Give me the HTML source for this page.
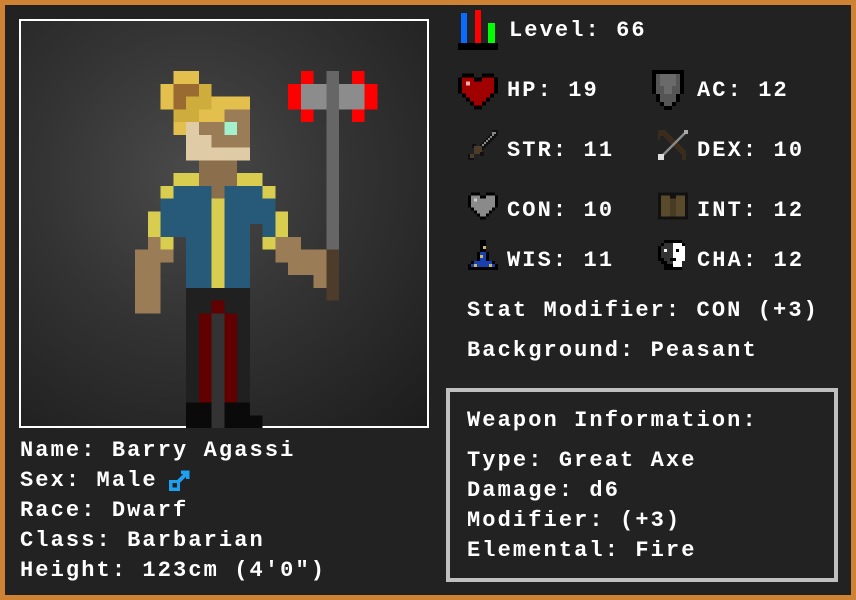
<!DOCTYPE html>
<html><head><meta charset="utf-8">
<style>
html,body{margin:0;padding:0;}
body{width:856px;height:600px;background:#cd8234;position:relative;overflow:hidden;font-family:"Liberation Mono",monospace;font-weight:bold;color:#fff;}
#panel{position:absolute;left:5px;top:5px;width:846px;height:590px;background:#222;}
#img{position:absolute;left:19px;top:19px;width:406px;height:405px;border:2px solid #fff;background:radial-gradient(circle at 42% 38%,#4a4a4a 0%,#333 45%,#1c1c1c 100%);}
.t{position:absolute;font-size:22px;letter-spacing:2.1px;line-height:22px;white-space:pre;}
#wbox{position:absolute;left:446px;top:388px;width:384px;height:186px;border:4px solid #c0c0c0;}
svg{position:absolute;shape-rendering:crispEdges;}
</style></head><body>
<div id="panel"></div>
<div id="img"></div>
<svg style="left:135px;top:71px" width="255" height="357" viewBox="0 0 20 28">
<g>
<rect x="3" y="0" width="2" height="1" fill="#e3bf4d"/>
<rect x="2" y="1" width="1" height="2" fill="#e3bf4d"/>
<rect x="3" y="1" width="2" height="1" fill="#9a6b30"/>
<rect x="3" y="2" width="1" height="1" fill="#9a6b30"/>
<rect x="5" y="1" width="1" height="1" fill="#cfad3c"/>
<rect x="4" y="2" width="2" height="1" fill="#cfad3c"/>
<rect x="6" y="2" width="3" height="1" fill="#e3bf4d"/>
<rect x="3" y="3" width="2" height="1" fill="#cfad3c"/>
<rect x="5" y="3" width="2" height="1" fill="#e3bf4d"/>
<rect x="7" y="3" width="2" height="1" fill="#9a7c56"/>
<rect x="3" y="4" width="1" height="1" fill="#e3bf4d"/>
<rect x="4" y="4" width="1" height="2" fill="#dfcba5"/>
<rect x="5" y="4" width="2" height="1" fill="#9a7c56"/>
<rect x="7" y="4" width="1" height="1" fill="#a3f0cc"/>
<rect x="8" y="4" width="1" height="1" fill="#9a7c56"/>
<rect x="5" y="5" width="1" height="1" fill="#dfcba5"/>
<rect x="6" y="5" width="3" height="1" fill="#9a7c56"/>
<rect x="4" y="6" width="5" height="1" fill="#dfcba5"/>
<rect x="5" y="7" width="3" height="2" fill="#8b6e4c"/>
<rect x="3" y="8" width="2" height="1" fill="#d9cd4f"/>
<rect x="8" y="8" width="2" height="1" fill="#d9cd4f"/>
<rect x="2" y="9" width="1" height="1" fill="#d9cd4f"/>
<rect x="10" y="9" width="1" height="1" fill="#d9cd4f"/>
<rect x="3" y="9" width="3" height="1" fill="#275a78"/>
<rect x="6" y="9" width="1" height="1" fill="#8b6e4c"/>
<rect x="7" y="9" width="3" height="1" fill="#275a78"/>
<rect x="2" y="10" width="4" height="3" fill="#275a78"/>
<rect x="7" y="10" width="4" height="2" fill="#275a78"/>
<rect x="7" y="12" width="2" height="1" fill="#275a78"/>
<rect x="10" y="12" width="1" height="1" fill="#275a78"/>
<rect x="1" y="11" width="1" height="2" fill="#d9cd4f"/>
<rect x="11" y="11" width="1" height="2" fill="#d9cd4f"/>
<rect x="6" y="10" width="1" height="7" fill="#d9cd4f"/>
<rect x="4" y="13" width="2" height="4" fill="#275a78"/>
<rect x="7" y="13" width="2" height="4" fill="#275a78"/>
<rect x="1" y="13" width="1" height="1" fill="#9a7c56"/>
<rect x="2" y="13" width="1" height="1" fill="#d9cd4f"/>
<rect x="10" y="13" width="1" height="1" fill="#d9cd4f"/>
<rect x="11" y="13" width="2" height="1" fill="#9a7c56"/>
<rect x="0" y="14" width="3" height="1" fill="#9a7c56"/>
<rect x="0" y="15" width="2" height="4" fill="#9a7c56"/>
<rect x="11" y="14" width="4" height="1" fill="#9a7c56"/>
<rect x="12" y="15" width="3" height="1" fill="#9a7c56"/>
<rect x="14" y="16" width="1" height="1" fill="#9a7c56"/>
<rect x="4" y="17" width="5" height="9" fill="#202020"/>
<rect x="6" y="18" width="1" height="1" fill="#600000"/>
<rect x="5" y="19" width="1" height="7" fill="#600000"/>
<rect x="7" y="19" width="1" height="7" fill="#600000"/>
<rect x="6" y="19" width="1" height="9" fill="#333"/>
<rect x="4" y="26" width="2" height="2" fill="#0a0a0a"/>
<rect x="7" y="26" width="2" height="2" fill="#0a0a0a"/>
<rect x="9" y="27" width="1" height="1" fill="#0a0a0a"/>
<rect x="15" y="0" width="1" height="14" fill="#666"/>
<rect x="15" y="14" width="1" height="4" fill="#4e3c2a"/>
<rect x="13" y="0" width="1" height="1" fill="#f00"/>
<rect x="17" y="0" width="1" height="1" fill="#f00"/>
<rect x="13" y="3" width="1" height="1" fill="#f00"/>
<rect x="17" y="3" width="1" height="1" fill="#f00"/>
<rect x="12" y="1" width="1" height="2" fill="#f00"/>
<rect x="18" y="1" width="1" height="2" fill="#f00"/>
<rect x="13" y="1" width="2" height="2" fill="#8c8c8c"/>
<rect x="16" y="1" width="2" height="2" fill="#8c8c8c"/>
</g>
</svg>

<svg style="left:458px;top:10px" width="40" height="40" viewBox="0 0 40 40">
<rect x="3" y="3" width="6" height="30" fill="#0a6cff"/>
<rect x="17" y="0" width="6" height="33" fill="#f00"/>
<rect x="30" y="13" width="7" height="20" fill="#0f0"/>
<rect x="0" y="33" width="40" height="7" fill="#000"/>
</svg>
<svg style="left:458px;top:73px" width="40" height="37" viewBox="0 0 10 9">
<path d="M1 0h3v1h2V0h3v1h1v4h-1v1h-1v1h-1v1h-1v1H4V8H3V7H2V6H1V5H0V1h1z" fill="#000"/>
<path d="M1 1h3v1h2V1h3v4H8v1H7v1H6v1H4V7H3V6H2V5H1z" fill="#a00000"/>
<rect x="2" y="2" width="1" height="1" fill="#f0b0b0"/>
</svg>
<svg style="left:651px;top:70px" width="34" height="40" viewBox="0 0 8 10">
<path d="M0 0h8v6H7v2H6v1H5v1H3V9H2V8H1V6H0z" fill="#000"/>
<path d="M1 1h6v5H6v2H5v1H3V8H2V6H1z" fill="#555"/>
<rect x="2" y="1" width="4" height="3" fill="#6a6a6a"/>
<rect x="3" y="4" width="2" height="2" fill="#6a6a6a"/>
</svg>
<svg style="left:468px;top:130px" width="30" height="30" viewBox="0 0 15 15">
<path d="M12 0h3v3h-1v1h-1v1h-1v1h-1v1h-1v1H9v1H8v1H7v1H6V9H5V8h1V7h1V6h1V5h1V4h1V3h1V2h1z" fill="#111"/>
<path d="M12 1h2v1h-1v1h-1v1h-1v1h-1v1H9v1H8v1H7v1H6V8h1V7h1V6h1V5h1V4h1V3h1z" fill="#888"/>
<rect x="2" y="7" width="2" height="2" fill="#111"/>
<rect x="3" y="8" width="4" height="4" fill="#4e3c2a"/>
<rect x="6" y="11" width="2" height="2" fill="#111"/>
<rect x="0" y="12" width="3" height="3" fill="#111"/>
<rect x="1" y="12" width="2" height="2" fill="#4e3c2a"/>
</svg>
<svg style="left:658px;top:130px" width="30" height="30" viewBox="0 0 15 15">
<path d="M0 0h4v1h1v1h1v1h1v1h1v1h1v1h1v1h1v1h1v1h1v1h1v5h-2v-3h-1v-1h-1v-1h-1v-1H9V9H8V8H7V7H6V6H5V5H4V4H3V3H1V5H0z" fill="#3a2c1c"/>
<path d="M2 13L14 1" stroke="#888" stroke-width="1.2"/>
<rect x="13" y="0" width="2" height="2" fill="#aaa"/>
<rect x="0" y="12" width="3" height="3" fill="#ddd"/>
</svg>
<svg style="left:468px;top:192px" width="30" height="28" viewBox="0 0 10 9">
<path d="M1 0h3v1h2V0h3v1h1v4h-1v1h-1v1h-1v1h-1v1H4V8H3V7H2V6H1V5H0V1h1z" fill="#000"/>
<path d="M1 1h3v1h2V1h3v4H8v1H7v1H6v1H4V7H3V6H2V5H1z" fill="#8a8a8a"/>
<rect x="2" y="2" width="1" height="1" fill="#ccc"/>
</svg>
<svg style="left:658px;top:192px" width="30" height="28" viewBox="0 0 10 9">
<rect x="0" y="0" width="10" height="9" fill="#111"/>
<rect x="1" y="1" width="3" height="7" fill="#5a4a2c"/>
<rect x="6" y="1" width="3" height="7" fill="#5a4a2c"/>
<rect x="4" y="2" width="2" height="6" fill="#4a3c24"/>
</svg>
<svg style="left:468px;top:240px" width="30" height="30" viewBox="0 0 10 10">
<path d="M4 0h2v4h1v3h2v1h1v2H0V8h1V7h2V4h1z" fill="#000"/>
<path d="M5 1v3h1v3h2v1h1v1H1V8h1V7h2V4h1z" fill="#1840b0"/>
<rect x="5" y="2" width="1" height="1" fill="#c8b860"/>
<rect x="4" y="5" width="1" height="1" fill="#c8b860"/>
<rect x="2" y="8" width="1" height="1" fill="#c8b860"/>
<rect x="7" y="8" width="1" height="1" fill="#c8b860"/>
</svg>
<svg style="left:658px;top:240px" width="30" height="30" viewBox="0 0 10 10">
<path d="M2 0h6v1h1v6H8v3H2V8H1V7H0V2h1V1h1z" fill="#000"/>
<path d="M2 1h3v7H3V7H2V6H1V2h1z" fill="#333"/>
<path d="M5 1h3v1h1v5H8v2H5z" fill="#fff"/>
<rect x="2" y="3" width="1" height="1" fill="#fff"/>
<rect x="6" y="3" width="1" height="1" fill="#000"/>
<rect x="4" y="6" width="2" height="1" fill="#000"/>
</svg>

<div class="t" style="left:509px;top:20px">Level: 66</div>
<div class="t" style="left:507px;top:80px">HP: 19</div>
<div class="t" style="left:697px;top:80px">AC: 12</div>
<div class="t" style="left:507px;top:140px">STR: 11</div>
<div class="t" style="left:697px;top:140px">DEX: 10</div>
<div class="t" style="left:507px;top:200px">CON: 10</div>
<div class="t" style="left:697px;top:200px">INT: 12</div>
<div class="t" style="left:507px;top:250px">WIS: 11</div>
<div class="t" style="left:697px;top:250px">CHA: 12</div>
<div class="t" style="left:467px;top:300px">Stat Modifier: CON (+3)</div>
<div class="t" style="left:467px;top:340px">Background: Peasant</div>

<div id="wbox"></div>
<div class="t" style="left:467px;top:410px">Weapon Information:</div>
<div class="t" style="left:467px;top:450px">Type: Great Axe</div>
<div class="t" style="left:467px;top:480px">Damage: d6</div>
<div class="t" style="left:467px;top:510px">Modifier: (+3)</div>
<div class="t" style="left:467px;top:540px">Elemental: Fire</div>

<div class="t" style="left:20px;top:440px">Name: Barry Agassi</div>
<div class="t" style="left:20px;top:470px">Sex: Male</div>
<svg style="left:168px;top:470px" width="22" height="22" viewBox="0 0 20 20">
<path d="M12 2h6v6M18 2L9 11" stroke="#1ea0f0" stroke-width="3.5" fill="none"/>
<rect x="2.5" y="10.5" width="7" height="7" stroke="#1ea0f0" stroke-width="3" fill="none"/>
</svg>
<div class="t" style="left:20px;top:500px">Race: Dwarf</div>
<div class="t" style="left:20px;top:530px">Class: Barbarian</div>
<div class="t" style="left:20px;top:560px">Height: 123cm (4'0")</div>
</body></html>
